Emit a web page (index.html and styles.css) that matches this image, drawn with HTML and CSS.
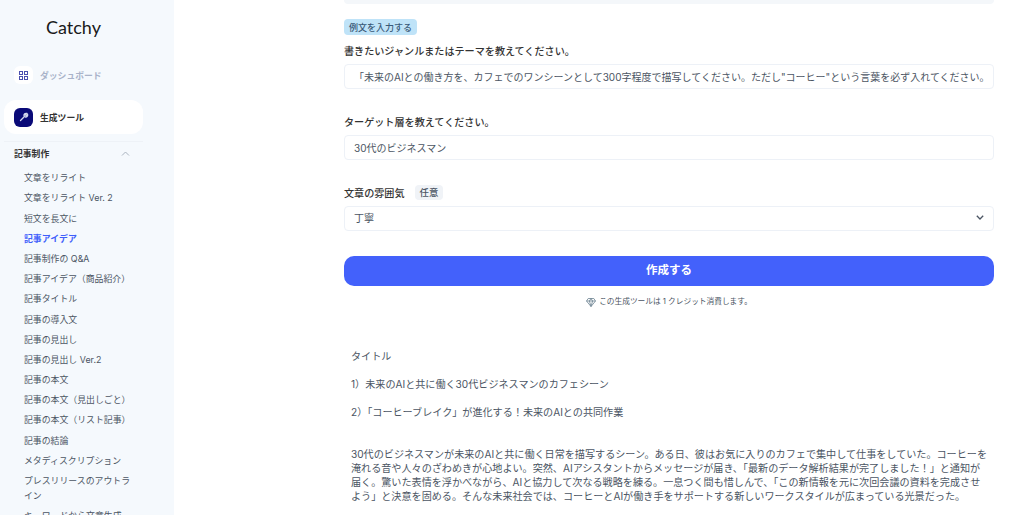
FILE: index.html

```html
<!DOCTYPE html>
<html lang="ja">
<head>
    <meta charset="UTF-8">
    <meta name="viewport" content="width=device-width, initial-scale=1.0">
    <title>Catchy</title>
    <link rel="stylesheet" href="styles.css">
</head>
<body>

<div class="page">
    <aside class="sidebar">
        <div class="logo">Catchy</div>

        <a class="nav-top" href="#">
            <span class="nav-icon">
                <svg width="9" height="9" viewBox="0 0 9 9" fill="none" stroke="#4a4fb0" stroke-width="1">
                    <rect x="0.5" y="0.5" width="3" height="3"/>
                    <rect x="5.5" y="0.5" width="3" height="3"/>
                    <rect x="0.5" y="5.5" width="3" height="3"/>
                    <rect x="5.5" y="5.5" width="3" height="3"/>
                </svg>
            </span>
            ダッシュボード
        </a>

        <a class="nav-active" href="#">
            <span class="nav-icon nav-icon-dark">
                <svg width="10" height="10" viewBox="0 0 10 10" fill="none" stroke="#d5d8ee" stroke-width="1.3" stroke-linecap="round">
                    <path d="M1.5 8.5L5.2 4.8"/>
                    <path d="M5 3.6a2 2 0 0 1 2.6-2.2L6.3 2.8l0.9 0.9 1.4-1.3A2 2 0 0 1 6.4 5z"/>
                </svg>
            </span>
            生成ツール
        </a>

        <div class="group-head">
            <span>記事制作</span>
            <svg width="9" height="5" viewBox="0 0 9 5" fill="none" stroke="#a9b3bf" stroke-width="1">
                <path d="M1 4.5L4.5 1L8 4.5"/>
            </svg>
        </div>

        <ul class="tool-list">
            <li><a href="#">文章をリライト</a></li>
            <li><a href="#">文章をリライト Ver. 2</a></li>
            <li><a href="#">短文を長文に</a></li>
            <li><a href="#" class="current">記事アイデア</a></li>
            <li><a href="#">記事制作の Q&amp;A</a></li>
            <li><a href="#">記事アイデア（商品紹介）</a></li>
            <li><a href="#">記事タイトル</a></li>
            <li><a href="#">記事の導入文</a></li>
            <li><a href="#">記事の見出し</a></li>
            <li><a href="#">記事の見出し Ver.2</a></li>
            <li><a href="#">記事の本文</a></li>
            <li><a href="#">記事の本文（見出しごと）</a></li>
            <li><a href="#">記事の本文（リスト記事）</a></li>
            <li><a href="#">記事の結論</a></li>
            <li><a href="#">メタディスクリプション</a></li>
            <li><a href="#">プレスリリースのアウトライン</a></li>
            <li><a href="#">キーワードから文章生成</a></li>
        </ul>
    </aside>

    <main class="main-content">
        <div class="top-box"></div>

        <button class="sample-btn" type="button">例文を入力する</button>

        <form class="tool-form">
            <div class="field field-first">
                <label class="field-label">書きたいジャンルまたはテーマを教えてください。</label>
                <div class="text-box">「未来のAIとの働き方を、カフェでのワンシーンとして300字程度で描写してください。ただし"コーヒー"という言葉を必ず入れてください。</div>
            </div>

            <div class="field">
                <label class="field-label">ターゲット層を教えてください。</label>
                <div class="text-box">30代のビジネスマン</div>
            </div>

            <div class="field field-short">
                <label class="field-label">文章の雰囲気 <span class="optional">任意</span></label>
                <div class="text-box select-box">
                    丁寧
                    <svg width="8" height="5" viewBox="0 0 8 5" fill="none" stroke="#4b5563" stroke-width="1.3">
                        <path d="M0.8 0.8L4 4L7.2 0.8"/>
                    </svg>
                </div>
            </div>

            <button class="submit-btn" type="button">作成する</button>

            <p class="credit">
                <svg width="10" height="9" viewBox="0 0 10 9" fill="none" stroke="#6b8290" stroke-width="0.8">
                    <path d="M2.2 0.5H7.8L9.5 3L5 8.5L0.5 3Z"/>
                    <path d="M0.5 3H9.5M3.4 3L5 8.5L6.6 3M3.4 3L5 0.5L6.6 3"/>
                </svg>
                この生成ツールは 1 クレジット消費します。
            </p>
        </form>

        <div class="result">
            <p>タイトル</p>
            <p>1）未来のAIと共に働く30代ビジネスマンのカフェシーン</p>
            <p>2）「コーヒーブレイク」が進化する！未来のAIとの共同作業</p>
            <p class="result-body">30代のビジネスマンが未来のAIと共に働く日常を描写するシーン。ある日、彼はお気に入りのカフェで集中して仕事をしていた。コーヒーを<br>淹れる音や人々のざわめきが心地よい。突然、AIアシスタントからメッセージが届き、「最新のデータ解析結果が完了しました！」と通知が<br>届く。驚いた表情を浮かべながら、AIと協力して次なる戦略を練る。一息つく間も惜しんで、「この新情報を元に次回会議の資料を完成させ<br>よう」と決意を固める。そんな未来社会では、コーヒーとAIが働き手をサポートする新しいワークスタイルが広まっている光景だった。</p>
        </div>
    </main>
</div>

</body>
</html>
```

FILE: styles.css

```css
* {
    box-sizing: border-box;
}

html, body {
    margin: 0;
    padding: 0;
    height: 100%;
    overflow: hidden;
}

body {
    font-family: Inter, "Noto Sans CJK JP", sans-serif;
    color: #374151;
    background-color: white;
}

a {
    color: inherit;
    text-decoration: none;
}

.page {
    display: flex;
    height: 515px;
    overflow: hidden;
}

/* sidebar */
.sidebar {
    width: 174px;
    flex-shrink: 0;
    padding: 0 31px 0 4px;
    background-color: #f5f9fd;
    overflow: hidden;
}

.logo {
    height: 66px;
    padding: 13px 0 0 42px;
    font-family: "Lato", sans-serif;
    font-size: 18px;
    line-height: 28px;
    color: #1a1a1a;
}

.nav-top,
.nav-active {
    display: flex;
    align-items: center;
    gap: 7px;
    font-size: 8.8px;
    font-weight: 700;
}

.nav-top {
    height: 18px;
    padding-left: 10px;
    color: #a9b3c9;
}

.nav-active {
    height: 34px;
    margin-top: 16px;
    padding-left: 10px;
    color: #333;
    background-color: white;
    border-radius: 12px;
}

.nav-icon {
    width: 19px;
    height: 18px;
    display: flex;
    align-items: center;
    justify-content: center;
    background-color: white;
    border-radius: 6px;
}

.nav-icon-dark {
    height: 19px;
    background-color: #0a0a78;
}

.group-head {
    display: flex;
    align-items: center;
    justify-content: space-between;
    height: 23px;
    margin-top: 7px;
    padding: 0 13px 0 10px;
    border-top: 1px solid #eef2f7;
    font-size: 8.8px;
    font-weight: 700;
    color: #333;
}

.tool-list {
    list-style: none;
    margin: 3.6px 0 0;
    padding: 0 8px 0 20px;
    font-size: 8.9px;
    line-height: 15px;
    color: #4b5563;
}

.tool-list li {
    padding: 2.6px 0;
}

.tool-list .current {
    color: #3f5ffb;
    font-weight: 700;
}

/* main */
.main-content {
    flex: 1;
    padding: 0 30px 0 170px;
    min-width: 0;
}

.top-box {
    height: 4px;
    background-color: #f4f7fa;
    border-radius: 0 0 8px 8px;
}

.sample-btn {
    display: block;
    height: 16px;
    margin-top: 15px;
    padding: 0 5px;
    border: none;
    border-radius: 4px;
    background-color: #bfe3f8;
    color: #3a5a78;
    font-family: inherit;
    font-size: 9px;
    font-weight: 500;
}

.field {
    margin-top: 26px;
}

.field-first {
    margin-top: 9px;
}

.field-short {
    margin-top: 25px;
}

.field-label {
    display: flex;
    align-items: center;
    gap: 10px;
    min-height: 14px;
    margin-bottom: 6px;
    font-size: 10.1px;
    line-height: 14px;
    font-weight: 500;
    color: #333;
}

.optional {
    padding: 0 5px;
    height: 15px;
    line-height: 15px;
    font-size: 9.4px;
    background-color: #f0f3f7;
    border-radius: 4px;
    color: #4b5563;
}

.text-box {
    height: 25px;
    padding: 0 9px;
    line-height: 24px;
    font-size: 10px;
    color: #4b5563;
    background-color: white;
    border: 1px solid #edf1f7;
    border-radius: 4px;
    white-space: nowrap;
    overflow: hidden;
}

.select-box {
    display: flex;
    align-items: center;
    justify-content: space-between;
    padding-bottom: 2px;
}

.submit-btn {
    display: block;
    width: 100%;
    height: 30px;
    margin-top: 25px;
    padding-bottom: 5px;
    border: none;
    border-radius: 10px;
    background-color: #4361fb;
    color: white;
    font-family: inherit;
    font-size: 11.5px;
    font-weight: 700;
}

.credit {
    display: flex;
    align-items: center;
    justify-content: center;
    gap: 3px;
    margin: 10px 0 0;
    font-size: 7.7px;
    line-height: 12px;
    color: #4b5563;
}

.result {
    margin-top: 41px;
    padding-left: 7px;
    font-size: 10.1px;
    line-height: 14.2px;
    color: #4b5563;
}

.result p {
    margin: 0 0 14px;
    white-space: nowrap;
}

.result .result-body {
    margin-top: 27px;
}
```
